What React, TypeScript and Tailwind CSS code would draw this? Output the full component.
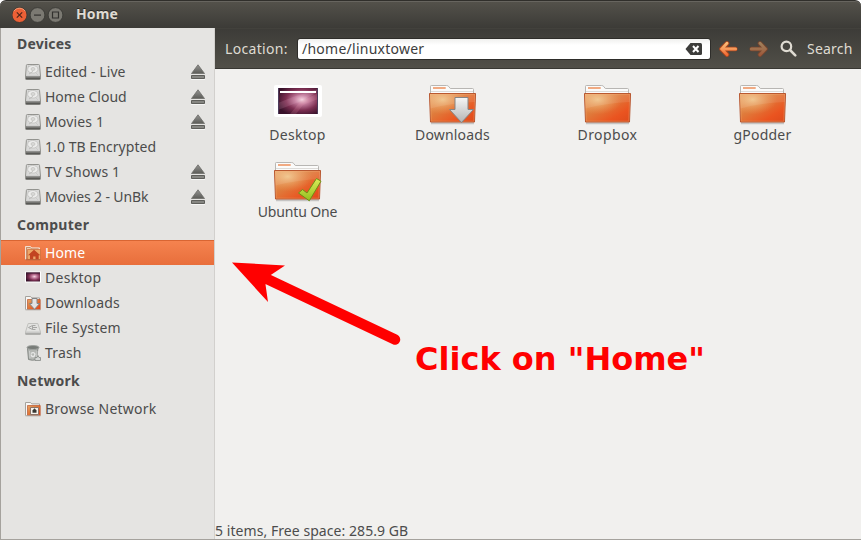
import React from "react";

type IconKind = "drive" | "home" | "desktop" | "downloads" | "filesystem" | "trash" | "network";

function Gradients() {
  return (
    <svg className="absolute" width="0" height="0" aria-hidden="true">
      <defs>
        <linearGradient id="folder" x1="0" y1="0" x2="1" y2="1">
          <stop offset="0" stopColor="#e9a566" />
          <stop offset="0.4" stopColor="#df7c3c" />
          <stop offset="0.75" stopColor="#ea5420" />
          <stop offset="1" stopColor="#dd4a1b" />
        </linearGradient>
        <radialGradient id="glow" cx="0.28" cy="0.2" r="0.55">
          <stop offset="0" stopColor="#f3d096" stopOpacity="0.8" />
          <stop offset="1" stopColor="#f0a060" stopOpacity="0" />
        </radialGradient>
        <linearGradient id="metal" x1="0" y1="0" x2="0" y2="1">
          <stop offset="0" stopColor="#f6f6f6" />
          <stop offset="1" stopColor="#b4b4b4" />
        </linearGradient>
        <linearGradient id="check" x1="0" y1="0" x2="0" y2="1">
          <stop offset="0" stopColor="#d9ec5a" />
          <stop offset="1" stopColor="#93bf1e" />
        </linearGradient>
        <linearGradient id="eject" x1="0" y1="0" x2="0" y2="1">
          <stop offset="0" stopColor="#949492" />
          <stop offset="1" stopColor="#5c5c58" />
        </linearGradient>
        <linearGradient id="arrow" x1="0" y1="0" x2="0" y2="1">
          <stop offset="0" stopColor="#fbc47e" />
          <stop offset="0.5" stopColor="#f6995a" />
          <stop offset="1" stopColor="#f05f2b" />
        </linearGradient>
        <radialGradient id="wall" cx="0.6" cy="0.45" r="0.65">
          <stop offset="0" stopColor="#f6d3df" />
          <stop offset="0.28" stopColor="#c27b9c" />
          <stop offset="0.62" stopColor="#7d2f52" />
          <stop offset="1" stopColor="#38122a" />
        </radialGradient>
      </defs>
    </svg>
  );
}

function SmallIcon({ kind }: { kind: IconKind }) {
  const folder = (
    <>
      <path d="M.5 14.5V1.5h5l1.3 1.4h7.7v3" fill="#f7f6f4" stroke="#a5a29d" />
      <path d="M2.5 4.5h12.7v10H2.5z" fill="url(#folder)" stroke="#b9552d" strokeWidth=".7" />
      <path d="M.5 14.8h15" stroke="#aaa6a1" />
    </>
  );
  return (
    <svg width="16" height="16" viewBox="0 0 16 16" className="shrink-0">
      {kind === "drive" && (
        <>
          <path d="M2.3.5h11.4q.7 0 .8.8L15.5 12v3q0 .5-.7.5H1.2q-.7 0-.7-.5v-3L1.4 1.3Q1.5.5 2.3.5Z" fill="#d9d9d8" stroke="#93938f" />
          <ellipse cx="7.8" cy="5.3" rx="5.2" ry="3.9" fill="#ececeb" stroke="#c8c8c6" />
          <ellipse cx="8" cy="5" rx="2" ry="1.5" fill="#dadad8" stroke="#bebebc" strokeWidth=".7" />
          <path d="m4 10 4-2.6M11.5 9.5l1 1M3 2l1 .5" stroke="#bcbcba" />
          <path d="M1 12h14v3H1z" fill="#767673" />
          <path d="M1.3 12.3h13.4" stroke="#a8a8a5" strokeWidth=".7" />
          <path d="M1 14.8h14" stroke="#4e4e4b" />
        </>
      )}
      {kind === "home" && (
        <>
          <path d="M.5 14.5V1.5h5l1.3 1.4h7.7v3" fill="#f0c9a8" stroke="#f3ded0" />
          <path d="M1.5 14V2.5h3.7l1.3 1.4h7" fill="none" stroke="#b4714c" strokeWidth=".7" />
          <path d="M2.5 4.5h13v10h-13z" fill="#eda768" stroke="#cc6b3a" strokeWidth=".7" />
          <path d="M9 4.7 15.3 10.3h-1.6v4.2h-3.2v-3H8.2v3H5v-4.2H3Z" fill="#c24421" />
          <path d="M.5 14.8h15" stroke="#b5633c" />
        </>
      )}
      {kind === "desktop" && (
        <>
          <path d="M0 1.5h16v11H0z" fill="#fff" />
          <path d="M1 2.5h14v9H1z" fill="url(#wall)" />
          <path d="M1 3h14" stroke="#3f2036" />
        </>
      )}
      {kind === "downloads" && (
        <>
          {folder}
          <path d="M7 3.5h5v5h2.7L9.5 14.3 4.3 8.5H7Z" fill="#e3e3e3" stroke="#858585" />
        </>
      )}
      {kind === "filesystem" && (
        <>
          <path d="M3.2 3.5h9.6L15.5 12v2H.5v-2Z" fill="#e2e2e0" stroke="#c0c0bd" />
          <path d="M1 11.5h14v2.3H1z" fill="#c9c9c7" />
          <path d="M.5 14h15" stroke="#8d8d8a" />
          <path d="m3.5 7.5 4-2v4Zm4-2h3m-3 4h3m-3-2h4.5" fill="none" stroke="#a6a6a4" />
        </>
      )}
      {kind === "trash" && (
        <>
          <path d="m2.5 3 1 11.5q4 1.5 8 0L13 3Z" fill="#b3b6b2" stroke="#858985" />
          <ellipse cx="8" cy="2.5" rx="6" ry="2" fill="#787c78" stroke="#a0a3a0" />
          <path d="m4.5 6 .5 7m7-7-.5 7" stroke="#cbcdcb" />
          <path d="M6 8.5q2.5-2 4 .5l-1 2.5H7l-1-2" fill="none" stroke="#e6e7e6" strokeWidth="1.3" />
          <path d="M10 15.5v-3h2l1-2 1 2h1.5v3Z" fill="#d4d6d4" stroke="#858985" strokeWidth=".8" />
        </>
      )}
      {kind === "network" && (
        <>
          {folder}
          <path d="M5.5 6.5h8v7h-8z" fill="#f5f2ed" stroke="#8c7366" />
          <path d="M7.5 9.5 9.5 7.3l2 2.2v2.3h-4Z" fill="#363632" />
        </>
      )}
    </svg>
  );
}

function EjectIcon() {
  return (
    <svg width="14" height="16" viewBox="0 0 14 16">
      <path d="M7 .8 13.5 9.5H.5Z" fill="url(#eject)" stroke="#6d6d69" strokeWidth=".8" />
      <path d="M.5 11.5h13v3H.5z" fill="#868682" stroke="#5f5f5b" />
      <path d="M0 15.5h14" stroke="#fff" strokeOpacity=".65" />
    </svg>
  );
}

interface Place {
  label: string;
  icon: IconKind;
  track: string;
  eject?: boolean;
  active?: boolean;
}

const sections: { title: string; track: string; places: Place[] }[] = [
  {
    title: "Devices",
    track: "tracking-[0.2px]",
    places: [
      { label: "Edited - Live", icon: "drive", track: "tracking-[0.1px]", eject: true },
      { label: "Home Cloud", icon: "drive", track: "tracking-[0px]", eject: true },
      { label: "Movies 1", icon: "drive", track: "tracking-[0.15px]", eject: true },
      { label: "1.0 TB Encrypted", icon: "drive", track: "tracking-[0.06px]" },
      { label: "TV Shows 1", icon: "drive", track: "tracking-[0.15px]", eject: true },
      { label: "Movies 2 - UnBk", icon: "drive", track: "tracking-[-0.12px]", eject: true },
    ],
  },
  {
    title: "Computer",
    track: "tracking-[0.28px]",
    places: [
      { label: "Home", icon: "home", track: "tracking-[0.1px]", active: true },
      { label: "Desktop", icon: "desktop", track: "tracking-[0.3px]" },
      { label: "Downloads", icon: "downloads", track: "tracking-[0.17px]" },
      { label: "File System", icon: "filesystem", track: "tracking-[0.2px]" },
      { label: "Trash", icon: "trash", track: "tracking-[0.15px]" },
    ],
  },
  {
    title: "Network",
    track: "tracking-[0.2px]",
    places: [{ label: "Browse Network", icon: "network", track: "tracking-[0.22px]" }],
  },
];

function PlaceRow({ place }: { place: Place }) {
  return (
    <li
      className={`flex h-[25px] items-center pr-[9px] pl-6 ${
        place.active ? "border-t border-[#d96532] bg-linear-to-b from-[#f5834f] to-[#e86e3b] text-white" : ""
      }`}
    >
      <SmallIcon kind={place.icon} />
      <span className={`ml-1 flex-1 whitespace-nowrap ${place.track}`}>{place.label}</span>
      {place.eject && <EjectIcon />}
    </li>
  );
}

function Sidebar() {
  return (
    <nav className="w-[214px] shrink-0 border-r border-[#d2d0cd] bg-[#e5e4e2]">
      {sections.map((s) => (
        <section key={s.title}>
          <h2 className="flex h-[31px] items-center pl-4 font-bold">
            <span className={s.track}>{s.title}</span>
          </h2>
          <ul>
            {s.places.map((p) => (
              <PlaceRow key={p.label} place={p} />
            ))}
          </ul>
        </section>
      ))}
    </nav>
  );
}

function TitleBar() {
  return (
    <header className="flex h-7 shrink-0 items-center rounded-t-[6px] border-t border-[#302f2b] bg-linear-to-b from-[#54524b] to-[#3c3b37] pl-3 shadow-[inset_0_1px_0_#67655f]">
      <svg width="52" height="16" viewBox="0 0 52 16">
        <circle cx="7.5" cy="8" r="7.5" fill="#ed6036" stroke="#343330" strokeWidth=".8" />
        <path d="M1.7 4.3a7 7 0 0 1 11.6 0" stroke="#f89d75" fill="none" />
        <path d="m4.8 5.3 5.4 5.4m0-5.4-5.4 5.4" stroke="#51251a" strokeWidth="1.2" />
        <circle cx="25.5" cy="8" r="7.4" fill="#7b7972" stroke="#343330" strokeWidth=".8" />
        <path d="M22 8.1h7" stroke="#32312e" strokeWidth="1.2" />
        <circle cx="43.5" cy="8" r="7.4" fill="#7b7972" stroke="#343330" strokeWidth=".8" />
        <path d="M40.5 5h6v6h-6z" fill="none" stroke="#32312e" strokeWidth="1.2" />
      </svg>
      <h1 className="ml-3 -mt-[2px] text-[14px] font-bold tracking-[0.1px] text-[#dfdbd2] [text-shadow:0_-1px_0_#292825]">Home</h1>
    </header>
  );
}

function NavArrow({ forward = false }: { forward?: boolean }) {
  return (
    <svg width="19" height="16" viewBox="0 0 19 16" className={forward ? "ml-[11px] -scale-x-100 opacity-50" : "ml-2"}>
      <path d="M8 2.5 2.5 8 8 13.5M3 8h13.3" fill="none" stroke="#a8461f" strokeWidth="4.6" strokeLinecap="round" strokeLinejoin="round" />
      <path d="M7 1.2Q8 .2 9 1.2t0 2L6 6.4h10.5a1.6 1.6 0 0 1 0 3.2H6l3 3.2q1 1 0 2t-2 0L.8 8Z" fill="url(#arrow)" />
    </svg>
  );
}

function Toolbar() {
  return (
    <div className="flex h-[41px] shrink-0 items-center border-t border-b border-t-[#42413c] border-b-[#383732] bg-linear-to-b from-[#3d3c38] to-[#514f48] pl-[10px] text-[#dfdbd2]">
      <span className="w-[72px] whitespace-nowrap tracking-[0.33px]">Location:</span>
      <div className="flex h-[22px] w-[414px] shrink-0 items-center rounded-[3px] border border-[#2e2d2a] bg-linear-to-b from-[#f0f0ee] to-white to-30% pr-2 pl-1 text-[#3c3c3c]">
        <span className="flex-1 tracking-[0.25px]">/home/linuxtower</span>
        <svg width="17" height="12" viewBox="0 0 17 12">
          <path d="M5.5 0h10Q17 0 17 1.5v9q0 1.5-1.5 1.5h-10L.5 6Z" fill="#3c3c3a" />
          <path d="m8 3 5.5 6m0-6L8 9" stroke="white" strokeWidth="2" />
        </svg>
      </div>
      <NavArrow />
      <NavArrow forward />
      <svg className="ml-[12px]" width="17" height="17" viewBox="0 0 17 17">
        <circle cx="6.4" cy="6.4" r="4.8" fill="none" stroke="#dfdbd2" strokeWidth="2.2" />
        <path d="m10 10 5.3 5.3" stroke="#dfdbd2" strokeWidth="2.5" strokeLinecap="round" />
      </svg>
      <span className="ml-[10px] tracking-[0.2px]">Search</span>
    </div>
  );
}

type Emblem = "download" | "check";

function FolderIcon({ emblem }: { emblem?: Emblem }) {
  return (
    <svg width="50" height="42" viewBox="0 0 50 42" className="overflow-visible">
      <path d="M3 38.3h43" stroke="#000" strokeOpacity=".18" strokeWidth="2" />
      <path d="M2.5 10V1.3Q2.5.5 3.3.5h15.3q1.4 0 2.2 1.1l1.5 1.9h22.2q1 0 1 1V10" fill="#fbfbfa" stroke="#b8b6b3" />
      <path d="M5 2h12.7v2H5z" fill="#f1aa82" />
      <path d="M3 6.5h42" stroke="#dddbd8" />
      <path d="M1.5 8.5h46l-1 28.5h-44Z" fill="url(#folder)" stroke="#b45029" />
      <path d="M2.3 9.2h44.4l-.9 27H3.2Z" fill="url(#glow)" stroke="#ffc48c" strokeOpacity=".35" strokeWidth=".8" />
      <path d="M2 9h45l-.3 8Q23 18 2.7 23.5Z" fill="#fff" fillOpacity=".09" />
      {emblem === "download" && (
        <path d="M27 12.5h13V24.5h5.5L33.5 37.5 21.5 24.5H27Z" fill="url(#metal)" stroke="#858585" strokeLinejoin="round" />
      )}
      {emblem === "check" && (
        <path d="m25.5 31 4-3.5 4.5 3.5L43.5 16.5l4.5 2.7-11.7 19.6Z" fill="url(#check)" stroke="#6e8f17" strokeLinejoin="round" />
      )}
    </svg>
  );
}

function DesktopIcon() {
  return (
    <svg width="50" height="42" viewBox="0 0 50 42">
      <rect x="1" y="0" width="48" height="32" rx="2" fill="#fff" />
      <path d="M5 3h40v26H5z" fill="url(#wall)" />
      <path d="M5 18 20 12 45 4v3L26 17 5 25Z" fill="#f4c8da" fillOpacity=".14" />
      <path d="m17 29 10-12L45 8v6L30 20l-7 9Z" fill="#f3a0b5" fillOpacity=".16" />
      <path d="M5.5 3v26M44.5 3v26" stroke="#4c3b5a" />
      <path d="M7 7h36" stroke="#fff" strokeWidth="2" />
    </svg>
  );
}

const files: { label: string; track: string; emblem?: Emblem; desktop?: boolean }[] = [
  { label: "Desktop", track: "tracking-[0.3px]", desktop: true },
  { label: "Downloads", track: "tracking-[0.17px]", emblem: "download" },
  { label: "Dropbox", track: "tracking-[0.4px]" },
  { label: "gPodder", track: "tracking-[0.2px]" },
  { label: "Ubuntu One", track: "tracking-[-0.15px]", emblem: "check" },
];

function FileGrid() {
  return (
    <ul className="grid grid-cols-[repeat(4,155px)] auto-rows-[77px] pt-4 pl-[5px]">
      {files.map((f) => (
        <li key={f.label} className="flex flex-col items-center">
          {f.desktop ? <DesktopIcon /> : <FolderIcon emblem={f.emblem} />}
          <span className={`-mt-[2px] leading-5 whitespace-nowrap ${f.track}`}>{f.label}</span>
        </li>
      ))}
    </ul>
  );
}

function Annotation() {
  return (
    <>
      <svg className="pointer-events-none absolute top-[250px] left-[220px]" width="190" height="110" viewBox="0 0 190 110">
        <path d="m45 28 130 61.5" stroke="#f00" strokeWidth="10.5" strokeLinecap="round" />
        <path d="m12 12.5 53 3-15 10-4.5 9 2.5 17.5Z" fill="#f00" />
      </svg>
      <p className="absolute top-[340px] left-[415px] font-['DejaVu_Sans',sans-serif] text-[32px] leading-[38px] font-bold whitespace-nowrap text-[#ff0000]">
        Click on "Home"
      </p>
    </>
  );
}

export default function App() {
  return (
    <div className="relative flex h-[540px] w-[861px] flex-col overflow-hidden bg-white font-['Noto_Sans','Open_Sans',sans-serif] text-[14px] leading-5 text-[#4c4c4c]">
      <Gradients />
      <TitleBar />
      <div className="flex min-h-0 flex-1 border-b border-l border-[#a5a29d]">
        <Sidebar />
        <main className="flex min-w-0 flex-1 flex-col bg-[#f1f0ee]">
          <Toolbar />
          <FileGrid />
          <footer className="mt-auto h-[17px] leading-[18px] whitespace-nowrap">
            <span className="tracking-[0.06px]">5 items, Free space: 285.9 GB</span>
          </footer>
        </main>
      </div>
      <Annotation />
    </div>
  );
}
